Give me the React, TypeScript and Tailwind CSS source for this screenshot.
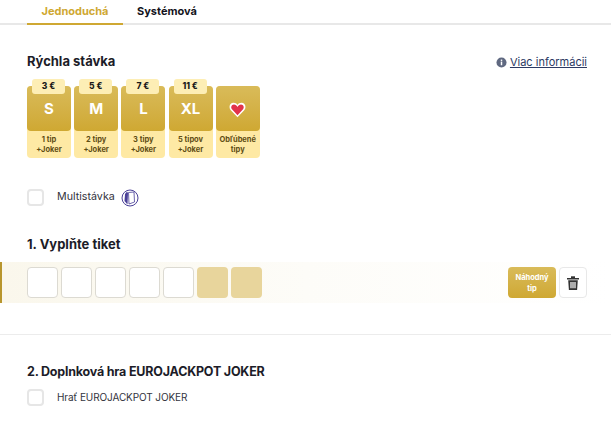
const FONT = "font-['Inter','Liberation_Sans',sans-serif]";

function Card({ price, size, l1, l2 }: { price?: string; size?: string; l1: string; l2: string }) {
  return (
    <div className="relative w-[44px] h-[72px] rounded-[4px] bg-[#fee9a4] flex flex-col">
      {price && (
        <div className="absolute -top-[7px] left-[5px] w-[33px] h-[15px] rounded-[3px] bg-[#fdeeb5] z-10 flex items-center justify-center text-[8.5px] font-extrabold text-[#1a1a1a]">
          {price}
        </div>
      )}
      <div className="h-[45px] rounded-[4px] bg-gradient-to-b from-[#d9bb59] to-[#cfa832] flex items-center justify-center text-white text-[15px] font-bold pt-[1px]">
        {size ?? (
          <svg width="17" height="17" viewBox="0 0 24 24">
            <path d="M12 23 L2.5 13 C-1 9 1 2.5 6.5 2.5 C9 2.5 11 3.8 12 5.5 C13 3.8 15 2.5 17.5 2.5 C23 2.5 25 9 21.5 13 Z" fill="#ffffff" />
            <path d="M12 20 L4.2 11.8 C2 9 3.6 5 7 5 C9.2 5 11 6.4 12 8.6 C13 6.4 14.8 5 17 5 C20.4 5 22 9 19.8 11.8 Z" fill="#e2334b" />
          </svg>
        )}
      </div>
      <div className="flex-1 flex flex-col items-center justify-center text-[7.5px] leading-[10px] font-bold text-[#5e4d14]">
        <span>{l1}</span>
        <span>{l2}</span>
      </div>
    </div>
  );
}

function Check() {
  return <div className="w-[17px] h-[17px] rounded-[4px] border-2 border-[#e6e6e6] bg-white shrink-0" />;
}

export default function App() {
  const cards = [
    { price: "3 €", size: "S", l1: "1 tip", l2: "+Joker" },
    { price: "5 €", size: "M", l1: "2 tipy", l2: "+Joker" },
    { price: "7 €", size: "L", l1: "3 tipy", l2: "+Joker" },
    { price: "11 €", size: "XL", l1: "5 tipov", l2: "+Joker" },
    { l1: "Obľúbené", l2: "tipy" },
  ];
  return (
    <div className={`${FONT} w-[611px] h-[430px] overflow-hidden bg-white text-[#1c1c28]`}>
      <div className="h-[25px] border-b-2 border-[#e8e8e8] flex pl-[27px]">
        <div className="w-[96px] h-[25px] border-b-2 border-[#cfa832] text-center text-[#cfa832] text-[11px] font-bold leading-[23px]">
          Jednoduchá
        </div>
        <div className="w-[88px] h-[23px] text-center text-[#14141c] text-[11px] font-bold leading-[23px]">
          Systémová
        </div>
      </div>

      <div className="pr-[24px] pl-[27px]">
        <div className="flex justify-between items-center mt-[27px] h-[20px]">
          <h2 className="text-[13px] font-bold">Rýchla stávka</h2>
          <a className="flex items-center gap-[3px] text-[11px] text-[#2c3a63] underline">
            <svg width="11" height="11" viewBox="0 0 12 12">
              <circle cx="6" cy="6" r="5.5" fill="#5f6880" />
              <rect x="5.2" y="5" width="1.6" height="4" fill="#fff" />
              <rect x="5.2" y="2.8" width="1.6" height="1.5" fill="#fff" />
            </svg>
            Viac informácii
          </a>
        </div>
        <div className="flex gap-[3.2px] mt-[14px]">
          {cards.map((c) => (
            <Card key={c.l1} {...c} />
          ))}
        </div>
        <div className="flex items-center mt-[31px] h-[17px]">
          <Check />
          <span className="ml-[13px] text-[10.7px] text-[#33333d]">Multistávka</span>
          <svg width="18" height="18" viewBox="0 0 18 18" className="ml-[6px]">
            <circle cx="9" cy="9" r="8" fill="#fff" stroke="#4a4098" strokeWidth="1" />
            <path d="M6 2.5 L4 5 L3.5 12 L6.5 15.5 L7 4 Z" fill="#4a4098" />
            <path d="M7.5 3.5 L13 3 L13.5 13 L8 15 Z" fill="#fff" stroke="#4a4098" strokeWidth="0.8" />
          </svg>
        </div>
        <h2 className="text-[13px] font-bold mt-[28px] h-[20px] leading-[20px]">1. Vyplňte tiket</h2>
      </div>

      <div className="mt-[8px] h-[41px] border-l-2 border-[#b8962e] bg-gradient-to-r from-[#faf7ec] via-[#fdfcf8] to-white flex items-center pl-[25px] pr-[24px]">
        <div className="flex gap-[3px]">
          {[0, 1, 2, 3, 4].map((i) => (
            <div key={i} className="w-[31px] h-[31px] rounded-[4px] bg-white border border-[#dcdad2]" />
          ))}
          {[0, 1].map((i) => (
            <div key={i} className="w-[31px] h-[31px] rounded-[4px] bg-[#e8d59c]" />
          ))}
        </div>
        <div className="ml-auto flex gap-[3px]">
          <div className="w-[48px] h-[31px] rounded-[4px] bg-gradient-to-b from-[#d9bb59] to-[#cfa832] flex items-center justify-center text-center text-white text-[7.5px] leading-[11px] font-bold">
            Náhodný
            <br />
            tip
          </div>
          <div className="w-[28px] h-[31px] rounded-[4px] bg-white border border-[#e8e8e8] flex items-center justify-center">
            <svg width="12" height="14" viewBox="0 0 12 14" fill="#333333">
              <rect x="0" y="2" width="12" height="1.5" />
              <rect x="4" y="0.3" width="4" height="1.7" />
              <path d="M1.2 4.3 H10.8 L10.1 14 H1.9 Z M3.4 6 V12.3 H4.6 V6 Z M5.4 6 V12.3 H6.6 V6 Z M7.4 6 V12.3 H8.6 V6 Z" fillRule="evenodd" />
            </svg>
          </div>
        </div>
      </div>

      <div className="mt-[31px] border-t border-[#ececec]" />
      <div className="pl-[27px]">
        <h2 className="text-[12.5px] font-bold mt-[27px] h-[20px] leading-[20px] tracking-[-0.2px]">2. Doplnková hra EUROJACKPOT JOKER</h2>
        <div className="flex items-center mt-[7px] h-[17px]">
          <Check />
          <span className="ml-[13px] text-[10px] leading-[15px] pb-[1px] text-[#33333d] tracking-[-0.1px]">Hrať EUROJACKPOT JOKER</span>
        </div>
      </div>
    </div>
  );
}
